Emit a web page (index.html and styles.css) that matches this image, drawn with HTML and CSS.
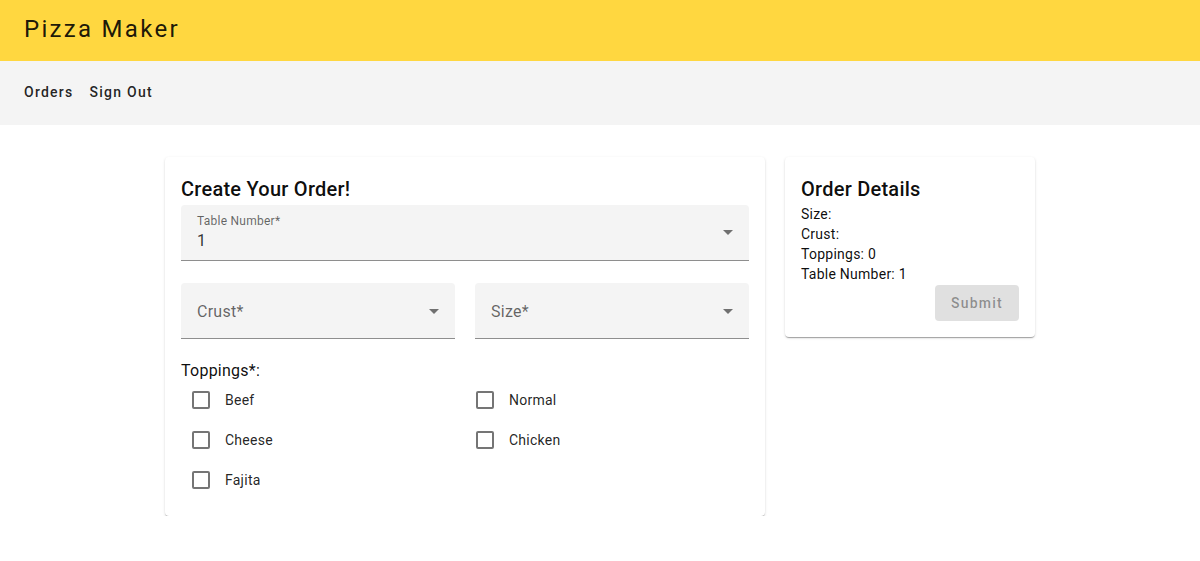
FILE: index.html
```html
<!DOCTYPE html>
<html lang="en">
<head>
<meta charset="utf-8">
<title>Pizza Maker</title>
<link rel="stylesheet" href="styles.css">
</head>
<body>
<header class="topbar">
  <span class="brand">Pizza Maker</span>
</header>
<nav class="navbar">
  <a class="nav-link" href="#">Orders</a>
  <a class="nav-link" href="#">Sign Out</a>
</nav>
<main class="content">
  <section class="card order-form">
    <h2 class="card-title">Create Your Order!</h2>
    <div class="field field-filled">
      <div class="field-text">
        <span class="field-label">Table Number*</span>
        <span class="field-value">1</span>
      </div>
      <span class="arrow"></span>
    </div>
    <div class="field-row">
      <div class="field">
        <span class="field-placeholder">Crust*</span>
        <span class="arrow"></span>
      </div>
      <div class="field">
        <span class="field-placeholder">Size*</span>
        <span class="arrow"></span>
      </div>
    </div>
    <div class="toppings-label">Toppings*:</div>
    <div class="toppings">
      <label class="check"><span class="box"></span><span class="check-text">Beef</span></label>
      <label class="check"><span class="box"></span><span class="check-text">Normal</span></label>
      <label class="check"><span class="box"></span><span class="check-text">Cheese</span></label>
      <label class="check"><span class="box"></span><span class="check-text">Chicken</span></label>
      <label class="check"><span class="box"></span><span class="check-text">Fajita</span></label>
    </div>
  </section>
  <section class="card details">
    <h2 class="card-title details-title">Order Details</h2>
    <div class="detail-line">Size:</div>
    <div class="detail-line">Crust:</div>
    <div class="detail-line">Toppings: 0</div>
    <div class="detail-line">Table Number: 1</div>
    <div class="actions">
      <button class="btn-submit" disabled>Submit</button>
    </div>
  </section>
</main>
</body>
</html>
```
FILE: styles.css
```css
* { box-sizing: border-box; }
html, body {
  margin: 0;
  padding: 0;
  background: #fff;
  font-family: Roboto, "Helvetica Neue", sans-serif;
  color: rgba(0,0,0,.87);
  letter-spacing: 0.25px;
}
.topbar {
  height: 61px;
  background: #ffd740;
  display: flex;
  align-items: center;
  padding: 0 24px;
}
.brand {
  font-size: 24px;
  font-weight: 400;
  letter-spacing: 2.3px;
  color: rgba(0,0,0,.9);
  margin-top: -3px;
}
.navbar {
  height: 64px;
  background: #f4f4f4;
  display: flex;
  align-items: center;
  padding: 0 24px 2px;
  gap: 16px;
}
.nav-link {
  font-size: 14px;
  font-weight: 500;
  letter-spacing: 1.25px;
  color: rgba(0,0,0,.87);
  text-decoration: none;
}
.content {
  display: flex;
  justify-content: center;
  align-items: flex-start;
  gap: 20px;
  padding-top: 32px;
}
.card {
  background: #fff;
  border-radius: 4px;
  padding: 16px;
  box-shadow: 0 2px 1px -1px rgba(0,0,0,.2), 0 1px 1px 0 rgba(0,0,0,.14), 0 1px 3px 0 rgba(0,0,0,.12);
}
.order-form { width: 600px; }
.details { width: 250px; }
.card-title {
  margin: 0;
  font-size: 20px;
  font-weight: 500;
  line-height: 32px;
  color: rgba(0,0,0,.95);
}
.details-title { margin-bottom: -1px; }
.field {
  height: 56px;
  background: #f4f4f4;
  border-radius: 4px 4px 0 0;
  border-bottom: 1px solid rgba(0,0,0,.42);
  display: flex;
  align-items: center;
  justify-content: space-between;
  padding: 1px 16px 0;
  margin-bottom: 22px;
}
.field-filled { align-items: flex-start; padding-top: 0; }
.field-text {
  display: flex;
  flex-direction: column;
  padding-top: 8px;
}
.field-label {
  font-size: 12px;
  line-height: 16px;
  color: rgba(0,0,0,.6);
}
.field-value {
  font-size: 16px;
  line-height: 24px;
  color: rgba(0,0,0,.8);
}
.field-placeholder {
  font-size: 16px;
  color: rgba(0,0,0,.6);
}
.arrow {
  width: 0;
  height: 0;
  border-left: 5px solid transparent;
  border-right: 5px solid transparent;
  border-top: 5px solid rgba(0,0,0,.54);
}
.field-filled .arrow { align-self: center; }
.field-row {
  display: grid;
  grid-template-columns: 1fr 1fr;
  gap: 20px;
}
.toppings-label {
  font-size: 16px;
  line-height: 20px;
  color: rgba(0,0,0,.95);
}
.toppings {
  display: grid;
  grid-template-columns: 1fr 1fr;
  margin-top: -1px;
}
.check {
  height: 40px;
  display: flex;
  align-items: center;
  font-size: 14px;
  color: rgba(0,0,0,.87);
}
.box {
  width: 18px;
  height: 18px;
  margin: 0 15px 0 11px;
  border: 2px solid rgba(0,0,0,.54);
  border-radius: 2px;
}
.detail-line {
  font-size: 14px;
  line-height: 20px;
  color: rgba(0,0,0,.95);
}
.actions {
  display: flex;
  justify-content: flex-end;
  margin-top: 1px;
}
.btn-submit {
  height: 36px;
  min-width: 64px;
  padding: 0 16px;
  border: none;
  border-radius: 4px;
  background: #e0e0e0;
  color: rgba(0,0,0,.38);
  font-family: Roboto, sans-serif;
  font-size: 14px;
  font-weight: 500;
  letter-spacing: 1.25px;
}
```
